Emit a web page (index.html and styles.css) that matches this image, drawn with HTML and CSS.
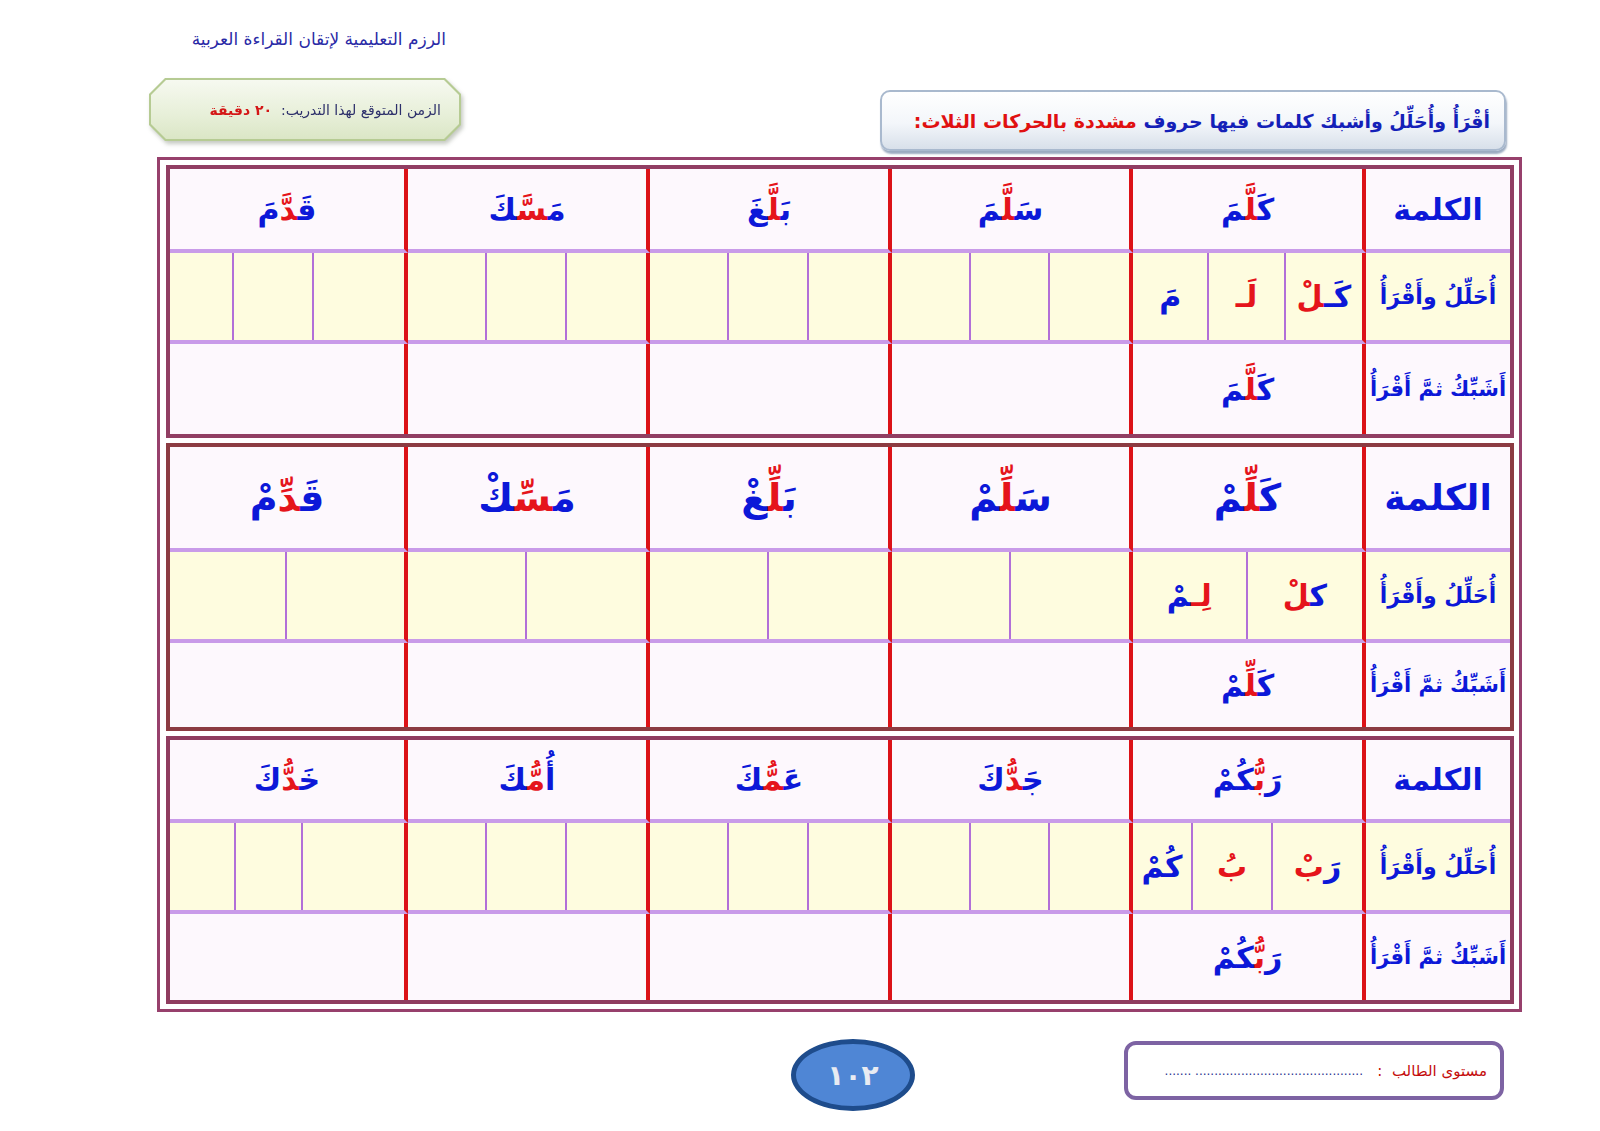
FILE: index.html
```html
<!DOCTYPE html>
<html lang="ar">
<head>
<meta charset="utf-8">
<title>الرزم التعليمية</title>
<link rel="stylesheet" href="styles.css">
</head>
<body>
<div class="page">
  <div class="brand">الرزم التعليمية لإتقان القراءة العربية</div>

  <div class="intro">
    <div class="timebox-wrap">
      <div class="timebox">
        <div class="timebox-in"><span class="t-label">الزمن المتوقع لهذا التدريب:</span>&nbsp;&nbsp;<span class="t-val">٢٠ دقيقة</span></div>
      </div>
    </div>
    <div class="task"><span class="task-b">أقْرَأُ وأُحَلِّلُ وأشبك كلمات فيها حروف</span>&nbsp;<span class="task-r">مشددة بالحركات الثلاث:</span></div>
  </div>

  <div class="frame">
    <!-- Block 1 -->
    <div class="block blk1">
      <div class="cell lbl r1 head1">الكلمة</div>
      <div class="cell w r1 head1">كَ&zwj;<span class="red">&zwj;لَّ&zwj;</span>&zwj;مَ</div>
      <div class="cell w r1 head1">سَ&zwj;<span class="red">&zwj;لَّ&zwj;</span>&zwj;مَ</div>
      <div class="cell w r1 head1">بَ&zwj;<span class="red">&zwj;لَّ&zwj;</span>&zwj;غَ</div>
      <div class="cell w r1 head1">مَ&zwj;<span class="red">&zwj;سَّ&zwj;</span>&zwj;كَ</div>
      <div class="cell w r1 head1">قَ&zwj;<span class="red">&zwj;دَّ</span>مَ</div>

      <div class="cell lbl r2 lbl-sm">أُحَلِّلُ وأَقْرَأُ</div>
      <div class="cell w r2 split three">
        <div class="sub">كَـ&zwj;<span class="red">&zwj;لْ</span></div>
        <div class="sub red">لَـ</div>
        <div class="sub">مَ</div>
      </div>
      <div class="cell w r2 split three"><div class="sub"></div><div class="sub"></div><div class="sub"></div></div>
      <div class="cell w r2 split three"><div class="sub"></div><div class="sub"></div><div class="sub"></div></div>
      <div class="cell w r2 split three"><div class="sub"></div><div class="sub"></div><div class="sub"></div></div>
      <div class="cell w r2 split odd-a"><div class="sub"></div><div class="sub"></div><div class="sub"></div></div>

      <div class="cell lbl r3 lbl-xs">أَشَبِّكُ ثمَّ أَقْرَأُ</div>
      <div class="cell w r3 word1">كَ&zwj;<span class="red">&zwj;لَّ&zwj;</span>&zwj;مَ</div>
      <div class="cell w r3"></div>
      <div class="cell w r3"></div>
      <div class="cell w r3"></div>
      <div class="cell w r3"></div>
    </div>

    <!-- Block 2 -->
    <div class="block blk2">
      <div class="cell lbl r1 head2l">الكلمة</div>
      <div class="cell w r1 head2">كَ&zwj;<span class="red">&zwj;لِّ&zwj;</span>&zwj;مْ</div>
      <div class="cell w r1 head2">سَ&zwj;<span class="red">&zwj;لِّ&zwj;</span>&zwj;مْ</div>
      <div class="cell w r1 head2">بَ&zwj;<span class="red">&zwj;لِّ&zwj;</span>&zwj;غْ</div>
      <div class="cell w r1 head2">مَ&zwj;<span class="red">&zwj;سِّ&zwj;</span>&zwj;كْ</div>
      <div class="cell w r1 head2">قَ&zwj;<span class="red">&zwj;دِّ</span>مْ</div>

      <div class="cell lbl r2 lbl-sm">أُحَلِّلُ وأَقْرَأُ</div>
      <div class="cell w r2 split two">
        <div class="sub">ك&zwj;<span class="red">&zwj;لْ</span></div>
        <div class="sub"><span class="red">لِـ&zwj;</span>&zwj;مْ</div>
      </div>
      <div class="cell w r2 split two"><div class="sub"></div><div class="sub"></div></div>
      <div class="cell w r2 split two"><div class="sub"></div><div class="sub"></div></div>
      <div class="cell w r2 split two"><div class="sub"></div><div class="sub"></div></div>
      <div class="cell w r2 split two"><div class="sub"></div><div class="sub"></div></div>

      <div class="cell lbl r3 lbl-xs">أَشَبِّكُ ثمَّ أَقْرَأُ</div>
      <div class="cell w r3 word1">كَ&zwj;<span class="red">&zwj;لِّ&zwj;</span>&zwj;مْ</div>
      <div class="cell w r3"></div>
      <div class="cell w r3"></div>
      <div class="cell w r3"></div>
      <div class="cell w r3"></div>
    </div>

    <!-- Block 3 -->
    <div class="block blk3">
      <div class="cell lbl r1 head1">الكلمة</div>
      <div class="cell w r1 head1">رَ<span class="red">بُّ&zwj;</span>&zwj;كُمْ</div>
      <div class="cell w r1 head1">جَ&zwj;<span class="red">&zwj;دُّ</span>كَ</div>
      <div class="cell w r1 head1">عَ&zwj;<span class="red">&zwj;مُّ&zwj;</span>&zwj;كَ</div>
      <div class="cell w r1 head1">أُ<span class="red">مُّ&zwj;</span>&zwj;كَ</div>
      <div class="cell w r1 head1">خَ&zwj;<span class="red">&zwj;دُّ</span>كَ</div>

      <div class="cell lbl r2 lbl-sm">أُحَلِّلُ وأَقْرَأُ</div>
      <div class="cell w r2 split odd-c">
        <div class="sub">رَ<span class="red">بْ</span></div>
        <div class="sub red">بُ</div>
        <div class="sub">كُمْ</div>
      </div>
      <div class="cell w r2 split three"><div class="sub"></div><div class="sub"></div><div class="sub"></div></div>
      <div class="cell w r2 split three"><div class="sub"></div><div class="sub"></div><div class="sub"></div></div>
      <div class="cell w r2 split three"><div class="sub"></div><div class="sub"></div><div class="sub"></div></div>
      <div class="cell w r2 split odd-b"><div class="sub"></div><div class="sub"></div><div class="sub"></div></div>

      <div class="cell lbl r3 lbl-xs">أَشَبِّكُ ثمَّ أَقْرَأُ</div>
      <div class="cell w r3 word1">رَ<span class="red">بُّ&zwj;</span>&zwj;كُمْ</div>
      <div class="cell w r3"></div>
      <div class="cell w r3"></div>
      <div class="cell w r3"></div>
      <div class="cell w r3"></div>
    </div>
  </div>

  <div class="footer">
    <div class="pagenum">١٠٢</div>
    <div class="level"><span class="lv-label">مستوى الطالب</span>&nbsp;&nbsp;<span class="lv-label">:</span>&nbsp;&nbsp;&nbsp;<span class="lv-dots">............................................ .......</span></div>
  </div>
</div>
</body>
</html>
```

FILE: styles.css
```css
* { box-sizing: border-box; }

body {
  margin: 0;
  background: #ffffff;
  font-family: "DejaVu Sans", "Liberation Sans", sans-serif;
}

.page {
  width: 1600px;
  height: 1131px;
  overflow: hidden;
  background: #ffffff;
}

/* ---------- header ---------- */
.brand {
  margin: 27px 0 0 149px;
  width: 297px;
  height: 24px;
  line-height: 24px;
  direction: rtl;
  white-space: nowrap;
  font-size: 17px;
  color: #2a2aa6;
}

.intro {
  display: flex;
  align-items: flex-start;
  margin-top: 27px;
  height: 73px;
}

.timebox-wrap {
  margin-left: 149px;
  filter: drop-shadow(2px 3px 2px rgba(90, 100, 80, 0.35));
}

.timebox {
  width: 312px;
  height: 63px;
  padding: 2px;
  background: #b6cb93;
  clip-path: polygon(16px 0, calc(100% - 16px) 0, 100% 16px, 100% calc(100% - 16px), calc(100% - 16px) 100%, 16px 100%, 0 calc(100% - 16px), 0 16px);
}

.timebox-in {
  height: 100%;
  display: flex;
  align-items: center;
  direction: rtl;
  padding-right: 18px;
  font-size: 14px;
  white-space: nowrap;
  background: linear-gradient(#f6f9f0, #e7efd8 60%, #dbe6c6);
  clip-path: polygon(15px 0, calc(100% - 15px) 0, 100% 15px, 100% calc(100% - 15px), calc(100% - 15px) 100%, 15px 100%, 0 calc(100% - 15px), 0 15px);
}

.t-label { color: #2c2f6a; }
.t-val { color: #d41616; font-weight: bold; }

.task {
  margin-left: 419px;
  margin-top: 12px;
  width: 626px;
  height: 61px;
  border: 2px solid #a9b9ce;
  border-radius: 10px;
  background: linear-gradient(#ffffff, #f3f6fa 55%, #d8e0ea);
  box-shadow: 1px 3px 2px #9babc1;
  direction: rtl;
  display: flex;
  align-items: center;
  padding-right: 14px;
  font-weight: bold;
  font-size: 19px;
  white-space: nowrap;
}

.task-b { color: #1420b8; }
.task-r { color: #e01010; }

/* ---------- table frame ---------- */
.frame {
  margin: 6px 0 0 157px;
  width: 1365px;
  border: 3px solid #97406c;
  padding: 5px 5px 5px 6px;
  display: flex;
  flex-direction: column;
  gap: 5px;
}

.block {
  display: grid;
  direction: rtl;
  grid-template-columns: 144px 233px 241px 242px 242px 238px;
  border: 4px solid #913e63;
}

.blk1 { grid-template-rows: 84px 91px 90px; }
.blk2 { grid-template-rows: 105px 91px 84px; border-color: #8c3b42; }
.blk3 { grid-template-rows: 83px 91px 86px; border-color: #8f3c5f; }

.cell {
  display: flex;
  align-items: center;
  justify-content: center;
  color: #0c18d8;
  font-weight: bold;
  white-space: nowrap;
}

.w { border-right: 4px solid #dc1218; }

.r1 { background: #fdf8fd; border-bottom: 4px solid #c99be9; }
.r2 { background: #fefcdf; border-bottom: 4px solid #c99be9; }
.r3 { background: #fdf8fd; }

.red { color: #e5141b; }

.head1 { font-size: 30px; }
.head2 { font-size: 38px; }
.head2l { font-size: 36px; }
.lbl-sm { font-size: 22px; }
.lbl-xs { font-size: 21px; }
.word1 { font-size: 30px; }

.split {
  display: grid;
  align-items: stretch;
  justify-content: stretch;
  font-size: 30px;
}

.split.three { grid-template-columns: 1fr 1fr 1fr; }
.split.two { grid-template-columns: 1fr 1fr; }
.split.odd-a { grid-template-columns: 90px 80px 1fr; }
.split.odd-b { grid-template-columns: 101px 67px 1fr; }
.split.odd-c { grid-template-columns: 89px 80px 1fr; }

.sub {
  display: flex;
  align-items: center;
  justify-content: center;
}

.sub + .sub { border-right: 2px solid #b26fd8; }

/* ---------- footer ---------- */
.footer {
  display: flex;
  align-items: flex-start;
  margin-top: 27px;
}

.pagenum {
  margin-left: 791px;
  width: 124px;
  height: 72px;
  border: 5px solid #1e4c8c;
  border-radius: 50%;
  background: #4f86d5;
  color: #e8ebf2;
  font-size: 28px;
  font-weight: bold;
  display: flex;
  align-items: center;
  justify-content: center;
}

.level {
  margin-left: 209px;
  margin-top: 2px;
  width: 380px;
  height: 59px;
  border: 4px solid #7d63a3;
  border-radius: 12px;
  direction: rtl;
  display: flex;
  align-items: center;
  padding-right: 13px;
  font-size: 15px;
  white-space: nowrap;
  overflow: hidden;
}

.lv-label { color: #c40d0d; }
.lv-dots { color: #2c3590; font-size: 12px; }
```
